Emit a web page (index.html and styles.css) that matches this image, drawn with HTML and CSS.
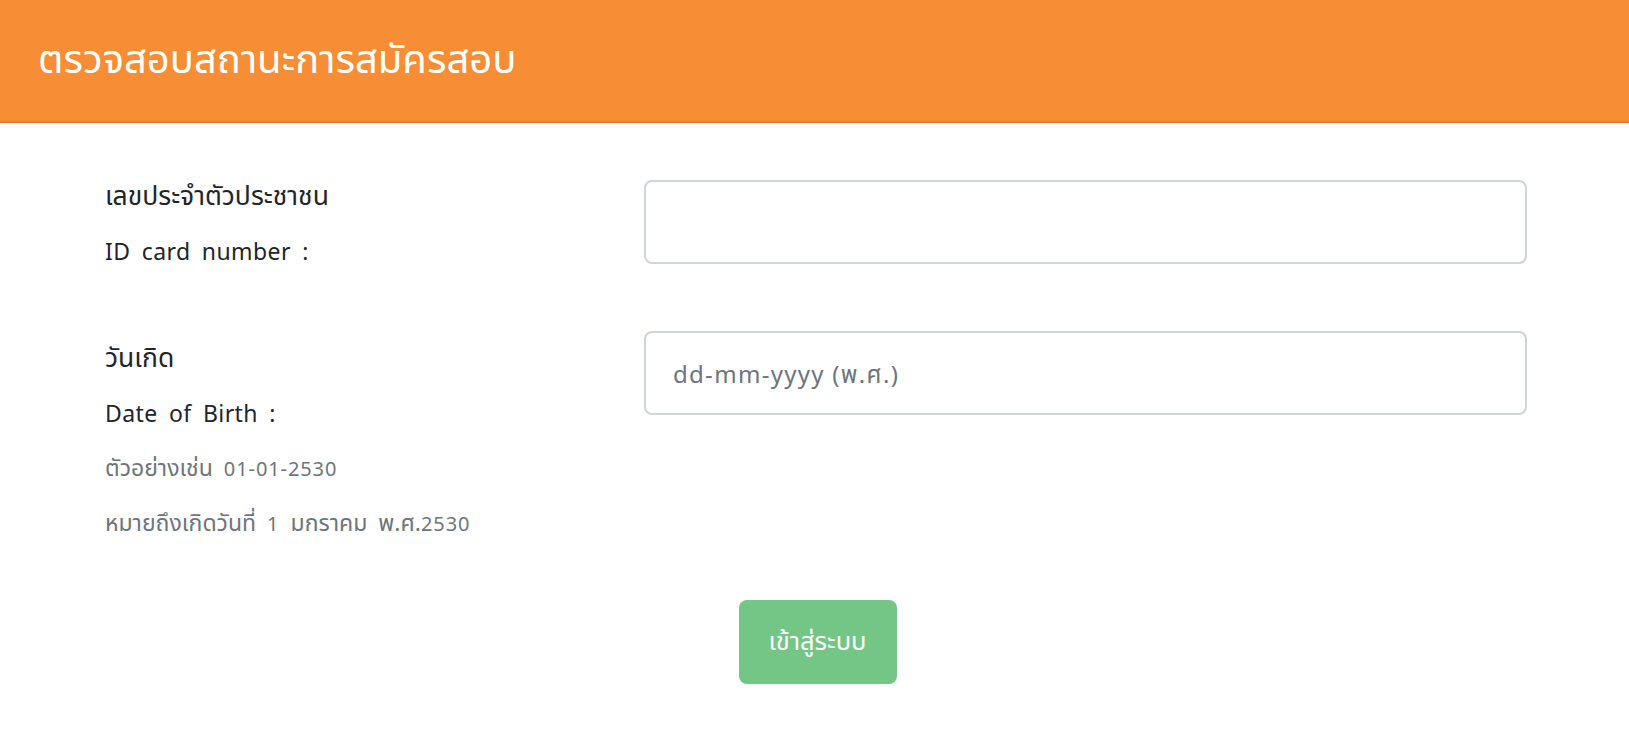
FILE: index.html
```html
<!DOCTYPE html>
<html lang="th">
<head>
<meta charset="utf-8">
<title>ตรวจสอบสถานะการสมัครสอบ</title>
<link rel="stylesheet" href="styles.css">
</head>
<body>
<header class="topbar">
  <h1 class="topbar-title">ตรวจสอบสถานะการสมัครสอบ</h1>
</header>
<main class="content">
  <form class="form">
    <div class="form-row form-row-id">
      <div class="label-block">
        <div class="label-line"><span class="th">เลขประจำตัวประชาชน</span></div>
        <div class="label-line">ID card number :</div>
      </div>
      <input class="field-input field-id" type="text">
    </div>
    <div class="form-row form-row-dob">
      <div class="label-block">
        <div class="label-line"><span class="th">วันเกิด</span></div>
        <div class="label-line">Date of Birth :</div>
        <div class="label-line hint"><span class="th">ตัวอย่างเช่น</span> 01-01-2530</div>
        <div class="label-line hint"><span class="th">หมายถึงเกิดวันที่</span> 1 <span class="th">มกราคม พ.ศ.</span>2530</div>
      </div>
      <input class="field-input" type="text" placeholder="dd-mm-yyyy (พ.ศ.)">
    </div>
    <div class="actions">
      <button class="btn-submit" type="button">เข้าสู่ระบบ</button>
    </div>
  </form>
</main>
</body>
</html>
```

FILE: styles.css
```css
* { box-sizing: border-box; }
html, body { margin: 0; padding: 0; background: #ffffff; }
body {
  font-family: "Noto Sans", "Noto Sans Thai", sans-serif;
  color: #212529;
}
.topbar {
  height: 123px;
  background: #f78d35;
  border-bottom: 2px solid #e2802e;
  display: flex;
  align-items: center;
  padding-left: 38px;
}
.topbar-title {
  margin: 0;
  font-size: 40px;
  font-weight: 400;
  color: #ffffff;
}
.content {
  padding: 46px 102px 40px 105px;
}
.form-row {
  display: grid;
  grid-template-columns: 539px 1fr;
  align-items: start;
}
.form-row-dob { margin-top: 52px; }
.form-row-id .field-input { margin-top: 11px; }
.label-line {
  height: 55px;
  font-size: 23px;
  line-height: 55px;
  letter-spacing: 0.4px;
  word-spacing: 5px;
  white-space: nowrap;
}
.label-line .th {
  font-size: 26.5px;
  line-height: 1;
  letter-spacing: 0;
}
.label-line.hint {
  font-size: 20px;
  letter-spacing: 0.9px;
  color: #6c757d;
}
.label-line.hint .th {
  font-size: 23px;
  letter-spacing: 0;
}
.field-input {
  width: 100%;
  height: 84px;
  border: 2px solid #ced4da;
  border-radius: 8px;
  padding: 0 27px;
  font-family: inherit;
  font-size: 24px;
  letter-spacing: 1.3px;
  color: #495057;
  background: #fff;
  outline: none;
}
.field-input::placeholder { color: #6c757d; }
.actions {
  display: flex;
  justify-content: center;
  margin-top: 49px;
}
.btn-submit {
  width: 158px;
  height: 84px;
  border: none;
  border-radius: 8px;
  background: #73c686;
  color: #ffffff;
  font-family: inherit;
  font-size: 25.5px;
  cursor: pointer;
  margin-left: 3px;
}
```
